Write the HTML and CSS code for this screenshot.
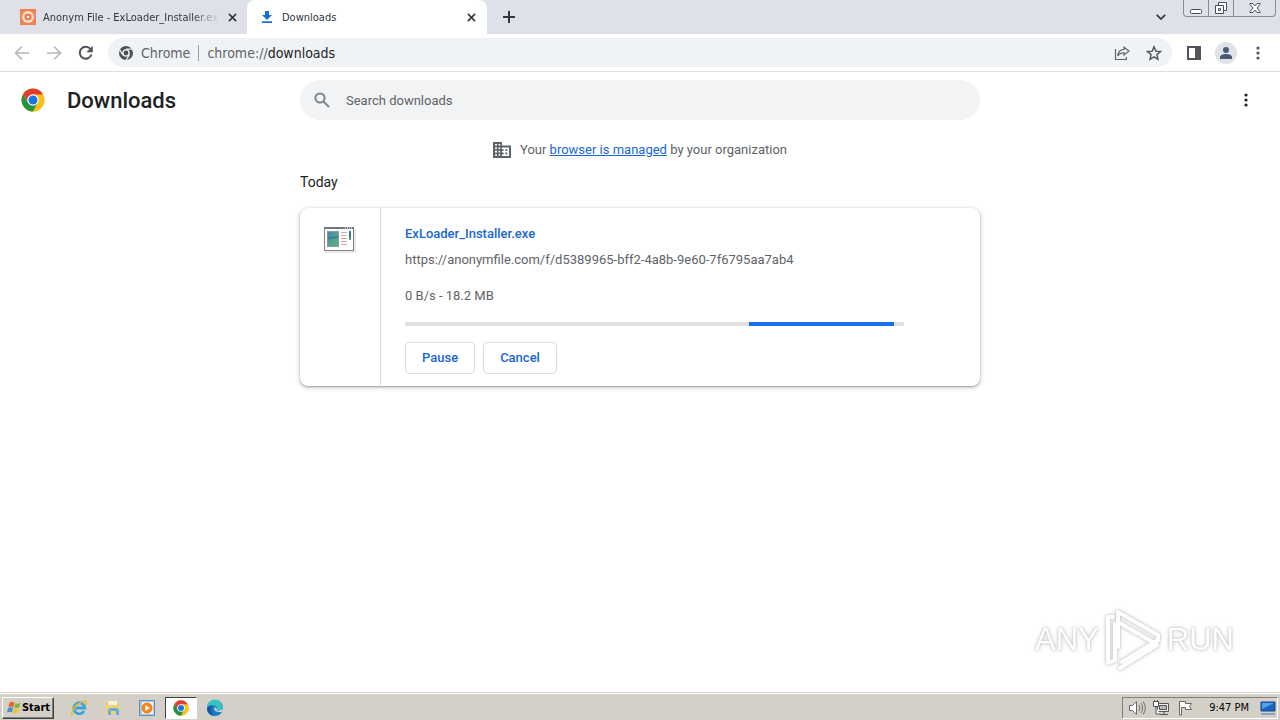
FILE: index.html
```html
<!DOCTYPE html>
<html lang="en">
<head>
  <meta charset="UTF-8">
  <title>Downloads</title>
  <link rel="stylesheet" href="styles.css">
</head>
<body>
<!-- shared shapes -->
<svg class="defs" aria-hidden="true">
  <symbol id="chrome" viewBox="0 0 48 48">
    <circle cx="24" cy="24" r="23" fill="#fbc116"/>
    <path d="M24 24 43.9 12.5A23 23 0 0 0 4.1 12.5L14.5 29.5z" fill="#e33b2e"/>
    <path d="M4.1 12.5A23 23 0 0 0 24 47l10-17.5L24 24 14 29.5z" fill="#229342"/>
    <path d="M24 13h19.9A23 23 0 0 1 24 47l9.5-17.5z" fill="#fbc116"/>
    <circle cx="24" cy="24" r="11.5" fill="#fff"/>
    <circle cx="24" cy="24" r="9" fill="#1a73e8"/>
  </symbol>
  <symbol id="close" viewBox="0 0 10 10">
    <path d="M1 1l8 8M9 1L1 9" fill="none" stroke="currentColor" stroke-width="1.8"/>
  </symbol>
  <symbol id="dots" viewBox="0 0 4 14">
    <circle cx="2" cy="2" r="1.6"/><circle cx="2" cy="7" r="1.6"/><circle cx="2" cy="12" r="1.6"/>
  </symbol>
</svg>

<header class="tab-strip">
  <div class="tab">
    <svg class="favicon" viewBox="0 0 16 16">
      <rect width="16" height="16" fill="#ef8354"/>
      <circle cx="8" cy="8" r="6" fill="#fbe0d1"/>
      <circle cx="8" cy="8" r="3.6" fill="#ef7d49"/>
      <circle cx="8" cy="8" r="1.3" fill="#fff"/>
    </svg>
    <span class="tab-title faded">Anonym File - ExLoader_Installer.exe</span>
    <button class="tab-close" aria-label="Close tab"><svg><use href="#close"/></svg></button>
  </div>
  <div class="tab active">
    <svg class="favicon" viewBox="0 0 16 16">
      <path d="M6 2h4v4h3L8 11 3 6h3zM3 12.3h10V14H3z" fill="#1a6fd6"/>
    </svg>
    <span class="tab-title">Downloads</span>
    <button class="tab-close" aria-label="Close tab"><svg><use href="#close"/></svg></button>
  </div>
  <button class="new-tab" aria-label="New tab">
    <svg viewBox="0 0 12 12"><path d="M6 0v12M0 6h12" stroke="currentColor" stroke-width="2"/></svg>
  </button>
  <button class="tab-search" aria-label="Search tabs">
    <svg viewBox="0 0 10 6"><path d="M.8.8 5 5 9.2.8" fill="none" stroke="currentColor" stroke-width="1.7"/></svg>
  </button>
  <div class="window-buttons">
    <button aria-label="Minimize">
      <svg viewBox="0 0 14 14"><rect x="1.5" y="8.5" width="11" height="4" rx="1" fill="#fff" stroke="#4a4e58"/></svg>
    </button>
    <button aria-label="Restore">
      <svg viewBox="0 0 14 14" fill="#fff" stroke="#4a4e58"><path d="M4.5 1.5h8v8h-8z"/><path d="M1.5 4.5h8v8h-8z"/><path d="M4.5 7.5h2v2h-2z"/></svg>
    </button>
    <button class="wide" aria-label="Close window">
      <svg viewBox="0 0 14 14"><path d="M2 2.5h3l2 2.3 2-2.3h3v1L9 7l3 3.5v1H9L7 9.2 5 11.5H2v-1L5 7 2 3.5z" fill="#fff" stroke="#4a4e58"/></svg>
    </button>
  </div>
</header>

<nav class="toolbar">
  <button class="nav-btn off" aria-label="Back">
    <svg viewBox="0 0 16 16"><path d="M15 8H2M8 1.5 1.5 8 8 14.5"/></svg>
  </button>
  <button class="nav-btn off" aria-label="Forward">
    <svg viewBox="0 0 16 16"><path d="M1 8h13M8 1.5 14.5 8 8 14.5"/></svg>
  </button>
  <button class="nav-btn" aria-label="Reload">
    <svg viewBox="0 0 16 16"><path d="M13.5 9.5A6 6 0 1 1 12.5 4" stroke-width="2"/><path d="M14.8.8v6.4H8.4z" fill="currentColor" stroke="none"/></svg>
  </button>
  <div class="address">
    <svg class="site-icon" viewBox="0 0 16 16">
      <circle cx="8" cy="8" r="7" fill="#4d5156"/>
      <path d="M8 4.2h7M4.7 9.9 1.3 4M11.3 9.9 8 15.5" stroke="#f0f3f5" stroke-width="1.2"/>
      <circle cx="8" cy="8" r="3.1" fill="#4d5156" stroke="#f0f3f5" stroke-width="1.4"/>
    </svg>
    <span class="site-name">Chrome</span>
    <span class="url">chrome://<b>downloads</b></span>
    <button class="icon-btn share" aria-label="Share">
      <svg viewBox="0 0 16 16" fill="none" stroke="#5f6368" stroke-width="1.2"><path d="M1.5 4v10.5h10.8V12"/><path d="M10 2.2 15 6l-5 4V7.8C7 7.6 5 8.8 3.7 11 4 7 6.5 4.6 10 4.3z"/></svg>
    </button>
    <button class="icon-btn" aria-label="Bookmark">
      <svg viewBox="0 0 16 16" fill="none" stroke="#505459" stroke-width="1.4"><path d="M8 1.7l1.8 4.4 4.7.4-3.6 3.1 1.1 4.7L8 11.8l-4 2.5 1.1-4.7-3.6-3.1 4.7-.4z"/></svg>
    </button>
  </div>
  <button class="icon-btn" aria-label="Side panel">
    <svg viewBox="0 0 16 16"><path d="M1 1h14v14H1zM3 3v10h6V3z" fill="#505459" fill-rule="evenodd"/></svg>
  </button>
  <button class="avatar" aria-label="Profile">
    <svg viewBox="0 0 14 14" fill="#4b5878"><circle cx="7" cy="4" r="3"/><path d="M1 13v-2c0-2 3-3 6-3s6 1 6 3v2z"/></svg>
  </button>
  <button class="icon-btn menu" aria-label="Chrome menu"><svg><use href="#dots"/></svg></button>
</nav>

<main class="page">
  <div class="page-header">
    <div class="brand">
      <svg class="logo"><use href="#chrome"/></svg>
      <h1>Downloads</h1>
    </div>
    <label class="search">
      <svg viewBox="0 0 16 16" fill="none" stroke="#80868b" stroke-width="2"><circle cx="6" cy="6" r="4.6"/><path d="M9.5 9.5l5.5 5.5"/></svg>
      <input type="text" placeholder="Search downloads" aria-label="Search downloads">
    </label>
    <button class="more" aria-label="More actions"><svg><use href="#dots"/></svg></button>
  </div>

  <p class="managed">
    <svg viewBox="0 0 18 16"><path d="M0 0h9v3.5h9V16H0z" fill="#5f6368"/><path d="M2 2h2v1.6H2zM5.5 2h1.8v1.6H5.500zM2 5.400h2V7H2zM5.500 5.400h1.800V7H5.500zM2 8.800h2v1.600H2zM5.500 8.800h1.800v1.600H5.500zM2 12.200h2v1.600H2zM5.500 12.200h1.800v1.600H5.500zM9 5.400h7v8.600H9v-1.600h1.600v-1.800H9V9h1.600V7.200H9z" fill="#fff"/><path d="M12.400 7.200h2V9h-2zM12.400 10.600h2v1.800h-2z" fill="#5f6368"/></svg>
    <span>Your <a href="#">browser is managed</a> by your organization</span>
  </p>

  <section class="downloads">
    <h2>Today</h2>
    <article class="card">
      <div class="file-icon">
        <svg viewBox="0 0 32 28">
          <defs><linearGradient id="pic" x2="1" y2="1"><stop stop-color="#4a87b5"/><stop offset="1" stop-color="#58b779"/></linearGradient></defs>
          <path d="M1 26h30V3" fill="none" stroke="#d0d2d4"/>
          <rect x="0.5" y="1.5" width="29" height="23" fill="#fff" stroke="#7b8288"/>
          <path d="M0 2h30" stroke="#6f7982" stroke-width="2"/>
          <path d="M21 2h1m1 0h1m1 0h1m1 0h1" stroke="#fff"/>
          <rect x="3.5" y="5.5" width="11" height="15" fill="url(#pic)" stroke="#8b9ba4"/>
          <path d="M4 13c4-4 7 1 10-3" fill="none" stroke="#3b7c8c" stroke-width="2"/>
          <path d="M17 6.5h6m-6 3h6m-6 3h6m-6 3h6m-6 3h6" stroke="#d7a6a3"/>
          <path d="M26 5v7" stroke="#317b96" stroke-width="2"/>
          <path d="M26 12v2" stroke="#55ae76" stroke-width="2"/>
        </svg>
      </div>
      <div class="details">
        <a class="file-name" href="#">ExLoader_Installer.exe</a>
        <p class="source">https://anonymfile.com/f/d5389965-bff2-4a8b-9e60-7f6795aa7ab4</p>
        <p class="status">0 B/s - 18.2 MB</p>
        <div class="progress" role="progressbar" aria-label="Download progress">
          <div class="bar" style="margin-left: 69%; width: 29%"></div>
        </div>
        <div class="actions">
          <button>Pause</button>
          <button>Cancel</button>
        </div>
      </div>
    </article>
  </section>

  <div class="watermark">
    <span>ANY</span>
    <svg viewBox="0 0 58 64" fill="none" stroke="#fff" stroke-width="4" stroke-linejoin="round" stroke-linecap="round">
      <path d="M14 39V4l40 23v5L18 54"/>
      <path d="M14 14l38 22"/>
      <path d="M9 9H4v46l7-3V16"/>
      <path d="M16 60l37-23"/>
    </svg>
    <span>RUN</span>
  </div>
</main>

<footer class="taskbar">
  <button class="start">
    <svg viewBox="0 0 18 16">
      <path d="M4 2c2-1.5 4-1 5.5 0L8.3 7C6.5 6 4.5 6 2.7 7z" fill="#e8642b"/>
      <path d="M10.5 2.5c2 1 4 .8 6-.3L15 7.2c-2 1-4 1-5.7.2z" fill="#7db843"/>
      <path d="M2.4 8c2-1.2 4-1 5.6 0l-1.3 5c-1.700-1-3.700-1-5.700 0z" fill="#4a8fd0"/>
      <path d="M9 8.400c2 1 4 .9 5.800-.2L13.500 13c-2 1.200-4 1.200-5.800.3z" fill="#f5c132"/>
    </svg>
    Start
  </button>
  <div class="launchers">
    <button aria-label="Internet Explorer">
      <svg viewBox="0 0 18 18" fill="none"><path d="M14 12a5.500 5.500 0 1 1 .7-3H5" stroke="#39a3df" stroke-width="2.800"/><path d="M3 15C-1 18 3 8 9 4.500S18 1 15.500 6" stroke="#e9b92f" stroke-width="1.500"/></svg>
    </button>
    <button aria-label="Windows Explorer">
      <svg viewBox="0 0 18 18"><path d="M2 3h5l1 2h7v10H2z" fill="#e7c75c"/><path d="M4 2h9v5H4z" fill="#f8f2cf"/><path d="M2 6h13v9H2z" fill="#f0d070"/><path d="M4 16v-4c0-2 1-3 3-3h5c2 0 3 1 3 3v4h-3v-4H7v4z" fill="#6aaedb"/></svg>
    </button>
    <button aria-label="Media Player">
      <svg viewBox="0 0 18 18"><rect x="1.500" y="1.500" width="15" height="15" fill="#a7cbe9" stroke="#5b8fbf"/><rect x="4" y="3" width="11" height="12" fill="#e9f3fa"/><circle cx="9" cy="9" r="5.500" fill="#f58516"/><path d="M7.300 6v6l4.700-3z" fill="#fff"/></svg>
    </button>
    <button class="pressed" aria-label="Chrome"><svg><use href="#chrome"/></svg></button>
    <button aria-label="Edge">
      <svg viewBox="0 0 18 18"><circle cx="9" cy="9" r="8" fill="#167bc8"/><path d="M1 9a8 8 0 0 1 16-1c.3 3-2 4.500-5 4-1.500-.3-1.500-1-1-2 .5-2-1-3.500-3.500-3.500C4.500 6.500 2 7 1 9z" fill="#35c1c0"/><path d="M7 7c-3 2-2 7 1.500 9.800C3 16.500 1 13 1 9.500 2 7 5 6 7 7z" fill="#1459a8"/><path d="M9 8c-2 2 0 6 7 5l1.500-3-5 2c-2-.2-2-1-1.500-2z" fill="#d6d1ca"/></svg>
    </button>
  </div>
  <div class="tray">
    <svg viewBox="0 0 18 18" fill="#fff" stroke="#686868"><path d="M1.500 6.500h3l4-4v13l-4-4h-3z"/><path d="M11 6c1 2 1 4 0 6M13 4c2 3 2 7 0 10M15 2.500c3 4 3 9 0 13" fill="none"/></svg>
    <svg viewBox="0 0 18 18" fill="#eee" stroke="#555"><path d="M5.500 4.500h11v8h-11z"/><path d="M7.500 6.500h7v4h-7z" fill="#bbb"/><path d="M8 15.500h8M12 13v2" fill="none"/><path d="M1.500 2.500h5v5h-5zM2.500 1v2m3-2v2M4 8v7h4" fill="#fff"/></svg>
    <svg viewBox="0 0 18 18" fill="#fff" stroke="#666"><path d="M3.500 16V2.500h6v2h6l-2 3 2 3h-6v-2h-4V16z"/></svg>
    <time>9:47 PM</time>
    <svg viewBox="0 0 18 18"><path d="M2 3h14v9H2z" fill="#1665c0" stroke="#124b8c"/><path d="M3 4h12l-12 6z" fill="#56a4e8"/><path d="M2 14h14v2H2z" fill="#8aa4bd"/></svg>
  </div>
</footer>
</body>
</html>
```
FILE: styles.css
```css
* {
  box-sizing: border-box;
}
body {
  margin: 0;
  min-height: 100vh;
  display: flex;
  flex-direction: column;
  background: #fff;
  color: #202124;
  font-family: Roboto, "Liberation Sans", sans-serif;
  font-size: 13px;
}
button {
  display: flex;
  align-items: center;
  justify-content: center;
  padding: 0;
  border: none;
  background: none;
  color: inherit;
  font: inherit;
}
svg {
  display: block;
  flex: none;
}
h1, h2, p {
  margin: 0;
}
.defs {
  position: absolute;
  width: 0;
  height: 0;
}

/* tabs */
.tab-strip {
  display: flex;
  height: 34px;
  background: #dee1e8;
  color: #33363b;
  font-family: "DejaVu Sans Condensed", "DejaVu Sans", sans-serif;
  font-size: 11px;
}
.tab {
  display: flex;
  align-items: center;
  width: 247px;
  padding: 0 7px 0 20px;
}
.tab.active {
  width: 240px;
  padding: 0 8px 0 12px;
  border-radius: 8px 8px 0 0;
  background: #fff;
}
.favicon {
  width: 16px;
  height: 16px;
}
.tab-title {
  flex: 1;
  margin: 0 5px 0 7px;
  overflow: hidden;
  white-space: nowrap;
}
.faded {
  mask-image: linear-gradient(to right, #000 85%, transparent);
}
.tab-close {
  width: 16px;
  height: 16px;
}
.tab-close svg {
  width: 9px;
  height: 9px;
}
.new-tab {
  width: 44px;
}
.new-tab svg {
  width: 12px;
  height: 12px;
}
.tab-search {
  width: 24px;
  margin-left: auto;
}
.tab-search svg {
  width: 10px;
  height: 6px;
}
.window-buttons {
  display: flex;
  height: 17px;
  margin: 0 4px 0 10px;
  border: 1px solid #888c96;
  border-top: none;
  border-radius: 0 0 4px 4px;
}
.window-buttons button {
  width: 25px;
  border-right: 1px solid #888c96;
}
.window-buttons .wide {
  width: 41px;
  border: none;
}
.window-buttons svg {
  width: 14px;
  height: 14px;
}

/* toolbar */
.toolbar {
  display: flex;
  align-items: center;
  height: 38px;
  padding: 0 12px 0 6px;
  border-bottom: 1px solid #dcdee0;
}
.nav-btn {
  width: 32px;
  height: 32px;
  color: #505459;
}
.nav-btn svg {
  width: 16px;
  height: 16px;
  fill: none;
  stroke: currentColor;
  stroke-width: 1.5;
}
.off {
  color: #b4b6b8;
}
.address {
  display: flex;
  flex: 1;
  align-items: center;
  height: 29px;
  margin: 0 6px;
  padding: 0 2px 0 10px;
  border-radius: 15px;
  background: #f0f3f5;
  color: #5f6368;
  font-family: "DejaVu Sans Condensed", "DejaVu Sans", sans-serif;
  font-size: 14px;
}
.site-icon {
  width: 16px;
  height: 16px;
}
.site-name {
  margin-left: 7px;
  padding-right: 8px;
  border-right: 1px solid #9a9da1;
}
.url {
  flex: 1;
  margin-left: 8px;
}
.url b {
  color: #202124;
  font-weight: normal;
}
.icon-btn {
  width: 32px;
  height: 28px;
}
.icon-btn svg {
  width: 16px;
  height: 16px;
}
.avatar {
  width: 22px;
  height: 22px;
  margin: 0 5px;
  border-radius: 50%;
  background: #dfe3e8;
}
.avatar svg {
  width: 14px;
  height: 14px;
}
.menu {
  width: 20px;
  margin-left: 6px;
  fill: #505459;
}
.menu svg,
.more svg {
  width: 4px;
  height: 14px;
}

/* downloads page */
.page {
  position: relative;
  flex: 1;
}
.page-header {
  display: grid;
  grid-template-columns: 1fr minmax(0, 680px) 1fr;
  align-items: center;
  height: 56px;
}
.brand {
  display: flex;
  align-items: center;
  gap: 22px;
  padding-left: 21px;
}
.logo {
  width: 24px;
  height: 24px;
}
h1 {
  font-size: 22px;
  font-weight: 500;
}
.search {
  display: flex;
  align-items: center;
  gap: 16px;
  height: 40px;
  padding: 0 14px;
  border-radius: 20px;
  background: #f1f3f4;
}
.search svg {
  width: 16px;
  height: 16px;
}
.search input {
  flex: 1;
  padding: 0;
  border: none;
  outline: none;
  background: none;
  font: inherit;
}
.search input::placeholder {
  color: #5f6368;
  opacity: 1;
}
.more {
  width: 20px;
  height: 32px;
  margin: 0 24px 0 auto;
  fill: #202124;
}
.managed {
  display: flex;
  align-items: center;
  justify-content: center;
  gap: 9px;
  height: 43px;
  color: #5f6368;
}
.managed svg {
  width: 18px;
  height: 16px;
}
a {
  color: #1967d2;
}
.downloads {
  max-width: 680px;
  margin: 0 auto;
}
h2 {
  font-size: 14px;
  font-weight: 400;
  line-height: 22px;
}
.card {
  display: flex;
  margin-top: 15px;
  border-radius: 8px;
  box-shadow: 0 1px 2px rgba(60, 64, 67, .4), 0 1px 4px 1px rgba(60, 64, 67, .18);
}
.file-icon {
  width: 81px;
  padding: 18px 0 0 24px;
  border-right: 1px solid #dadce0;
}
.file-icon svg {
  width: 32px;
  height: 28px;
}
.details {
  flex: 1;
  padding: 16px 76px 12px 24px;
  color: #5f6368;
  line-height: 20px;
}
.file-name {
  font-weight: 500;
  text-decoration: none;
}
.source {
  margin-top: 6px;
}
.status {
  margin-top: 16px;
}
.progress {
  margin-top: 16px;
  background: #dfdfdf;
}
.bar {
  height: 4px;
  background: #1a6fe8;
}
.actions {
  display: flex;
  gap: 8px;
  margin-top: 16px;
}
.actions button {
  height: 32px;
  padding: 0 16px;
  border: 1px solid #dadce0;
  border-radius: 4px;
  color: #1967d2;
  font-weight: 500;
}

/* logo over the lower right corner */
.watermark {
  position: absolute;
  right: 46px;
  bottom: 20px;
  display: flex;
  align-items: center;
  gap: 5px;
  color: #fff;
  font-family: "Liberation Sans", sans-serif;
  font-size: 31px;
  filter: drop-shadow(0 0 1px #bbb) drop-shadow(0 0 2px #ddd);
}
.watermark svg {
  width: 58px;
  height: 64px;
}

/* taskbar */
.taskbar {
  display: flex;
  align-items: center;
  height: 28px;
  padding: 2px 0 0 2px;
  border-top: 1px solid #d4d0c8;
  background: #d4d0c8;
  box-shadow: inset 0 1px #fff;
  color: #000;
  font-family: "DejaVu Sans Condensed", "DejaVu Sans", sans-serif;
  font-size: 11px;
}
.start {
  width: 52px;
  height: 22px;
  border: 1px solid;
  border-color: #fff #404040 #404040 #fff;
  box-shadow: inset -1px -1px #808080;
  font-weight: bold;
}
.start svg {
  width: 16px;
  height: 16px;
}
.launchers {
  display: flex;
  gap: 2px;
  margin-left: 9px;
}
.launchers button {
  width: 32px;
  height: 22px;
}
.launchers svg {
  width: 18px;
  height: 18px;
}
.launchers .pressed {
  border: 1px solid;
  border-color: #404040 #fff #fff #404040;
  background: #fff;
}
.launchers .pressed svg {
  width: 16px;
  height: 16px;
}
.tray {
  display: flex;
  align-items: center;
  gap: 6px;
  height: 22px;
  margin: 0 2px 0 auto;
  padding: 0 0 0 5px;
  border: 1px solid;
  border-color: #808080 #fff #fff #808080;
}
.tray svg {
  width: 18px;
  height: 18px;
}
.tray time {
  margin: 0 4px 0 9px;
}
```
